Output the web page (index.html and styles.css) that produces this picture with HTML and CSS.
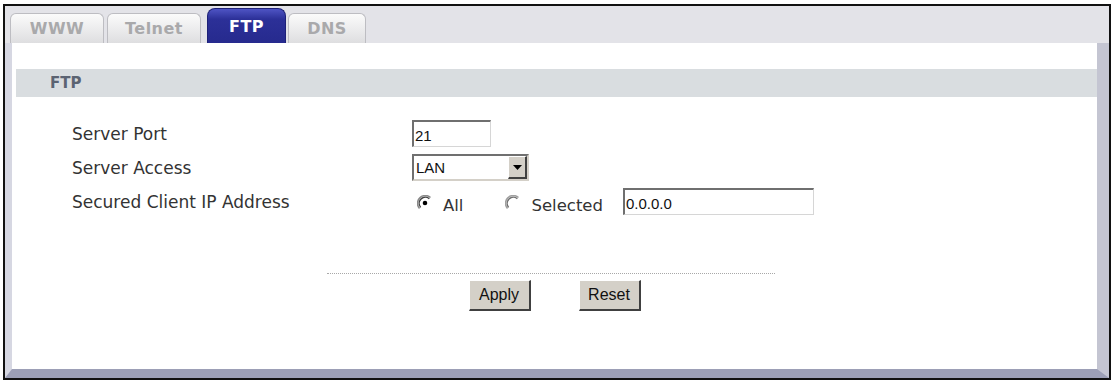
FILE: index.html
```html
<!DOCTYPE html>
<html lang="en">
<head>
    <meta charset="UTF-8">
    <title>FTP</title>
    <link rel="stylesheet" href="styles.css">
</head>
<body>
    <div class="window">
        <div class="tabs">
            <div class="tab tab-www">WWW</div>
            <div class="tab tab-telnet">Telnet</div>
            <div class="tab tab-ftp active">FTP</div>
            <div class="tab tab-dns">DNS</div>
        </div>
        <div class="panel">
            <div class="section-title">FTP</div>

            <div class="form">
                <div class="label">Server Port</div>
                <div class="field"><input class="text-input port-input" type="text" value="21"></div>

                <div class="label">Server Access</div>
                <div class="field">
                    <div class="select">
                        <span class="select-value">LAN</span>
                        <span class="select-button">
                            <svg width="9" height="5" viewBox="0 0 9 5"><path d="M0 0H9L4.5 5Z" fill="#000"/></svg>
                        </span>
                    </div>
                </div>

                <div class="label">Secured Client IP Address</div>
                <div class="field">
                    <span class="radio">
                        <svg width="16" height="16" viewBox="0 0 14 14">
                            <circle cx="7" cy="7" r="6" fill="#fff"/>
                            <path d="M2.2 11.8A6.8 6.8 0 0 1 11.8 2.2" fill="none" stroke="#8a8a8a" stroke-width="1.4"/>
                            <path d="M3.2 10.8A5.4 5.4 0 0 1 10.8 3.2" fill="none" stroke="#404040" stroke-width="1.2"/>
                            <circle cx="7" cy="7" r="2" fill="#000"/>
                        </svg>
                    </span>
                    <span class="radio-label">All</span>
                    <span class="radio radio-second">
                        <svg width="16" height="16" viewBox="0 0 14 14">
                            <circle cx="7" cy="7" r="6" fill="#fff"/>
                            <path d="M2.2 11.8A6.8 6.8 0 0 1 11.8 2.2" fill="none" stroke="#a0a0a0" stroke-width="1.4"/>
                            <path d="M3.2 10.8A5.4 5.4 0 0 1 10.8 3.2" fill="none" stroke="#707070" stroke-width="1.2"/>
                        </svg>
                    </span>
                    <span class="radio-label">Selected</span>
                    <input class="text-input ip-input" type="text" value="0.0.0.0">
                </div>
            </div>

            <div class="divider"></div>
            <div class="buttons">
                <button class="btn">Apply</button>
                <button class="btn">Reset</button>
            </div>
        </div>
    </div>
</body>
</html>
```

FILE: styles.css
```css
body {
    margin: 0;
    background-color: #fff;
    font-family: "DejaVu Sans", Verdana, sans-serif;
}
.window {
    box-sizing: border-box;
    width: 1108px;
    height: 376px;
    margin: 4px 1px 2px 3px;
    border: 2px solid #111;
    background-color: #e3e3e8;
    display: flex;
    flex-direction: column;
}
.tabs {
    height: 37px;
    display: flex;
    align-items: flex-end;
    padding-left: 5px;
}
.tab {
    box-sizing: border-box;
    height: 30px;
    margin-right: 3px;
    border: 1px solid #bdbdc2;
    border-bottom: none;
    border-radius: 6px 6px 0 0;
    background: linear-gradient(#fbfbfb, #dedee0);
    color: #a9a9ab;
    font-size: 16px;
    font-weight: bold;
    letter-spacing: 0.5px;
    display: flex;
    align-items: center;
    justify-content: center;
}
.tab-www { width: 94px; }
.tab-telnet { width: 94px; margin-right: 6px; }
.tab-ftp { width: 79px; margin-right: 2px; }
.tab-dns { width: 78px; }
.tab.active {
    height: 35px;
    border: 1px solid #1d2078;
    border-bottom: none;
    background: linear-gradient(#4e54c4, #2c3098 30%, #262a8e);
    color: #fff;
    border-radius: 8px 8px 0 0;
}
.panel {
    flex: 1;
    background-color: #fff;
    border-left: 7px solid #d6d7e2;
    border-right: 12px solid #c4c5d2;
    border-bottom: 9px solid #9c9fb6;
    padding: 26px 0 0 4px;
}
.section-title {
    height: 28px;
    background-color: #d9dde0;
    color: #5b6372;
    font-size: 15px;
    font-weight: bold;
    line-height: 28px;
    padding-left: 34px;
}
.form {
    display: grid;
    grid-template-columns: 340px 1fr;
    grid-auto-rows: 27px;
    row-gap: 7px;
    margin-top: 23px;
    padding-left: 56px;
}
.label {
    font-size: 17px;
    color: #333;
    display: flex;
    align-items: center;
}
.field {
    display: flex;
    align-items: center;
}
.text-input {
    box-sizing: border-box;
    height: 27px;
    border-style: solid;
    border-width: 2px 1px 1px 2px;
    border-color: #6f6f6f #d6d6d6 #d6d6d6 #6f6f6f;
    font-family: "Liberation Sans", Arial, sans-serif;
    font-size: 15px;
    padding: 2px 1px 0;
    color: #111;
    outline: none;
}
.port-input { width: 79px; }
.ip-input { width: 191px; margin-left: 20px; }
.select {
    box-sizing: border-box;
    width: 117px;
    height: 27px;
    border-style: solid;
    border-width: 2px;
    border-color: #707070 #d4d0c8 #d4d0c8 #707070;
    display: flex;
    align-items: stretch;
    font-family: "Liberation Sans", Arial, sans-serif;
    font-size: 15px;
    color: #111;
}
.select-value {
    flex: 1;
    padding: 3px 0 0 2px;
}
.select-button {
    width: 19px;
    background-color: #d4d0c8;
    border-style: solid;
    border-width: 1px 2px 2px 1px;
    border-color: #fff #404040 #404040 #fff;
    box-sizing: border-box;
    display: flex;
    align-items: center;
    justify-content: center;
}
.radio {
    display: flex;
    margin-left: 5px;
    padding-top: 2px;
}
.radio-second {
    margin-left: 42px;
}
.radio-label {
    font-size: 16.5px;
    color: #333;
    margin-left: 10px;
    padding-top: 8px;
}
.divider {
    width: 448px;
    margin: 58px 0 0 311px;
    border-top: 1px dotted #a8a8a8;
}
.buttons {
    display: flex;
    justify-content: center;
    gap: 48px;
    margin-top: 6px;
    padding-right: 4px;
}
.btn {
    box-sizing: border-box;
    width: 62px;
    height: 31px;
    background-color: #d4d0c8;
    border-style: solid;
    border-width: 1px 2px 2px 1px;
    border-color: #fff #404040 #404040 #fff;
    font-family: "Liberation Sans", Arial, sans-serif;
    font-size: 16px;
    color: #111;
    padding: 0;
}
```
